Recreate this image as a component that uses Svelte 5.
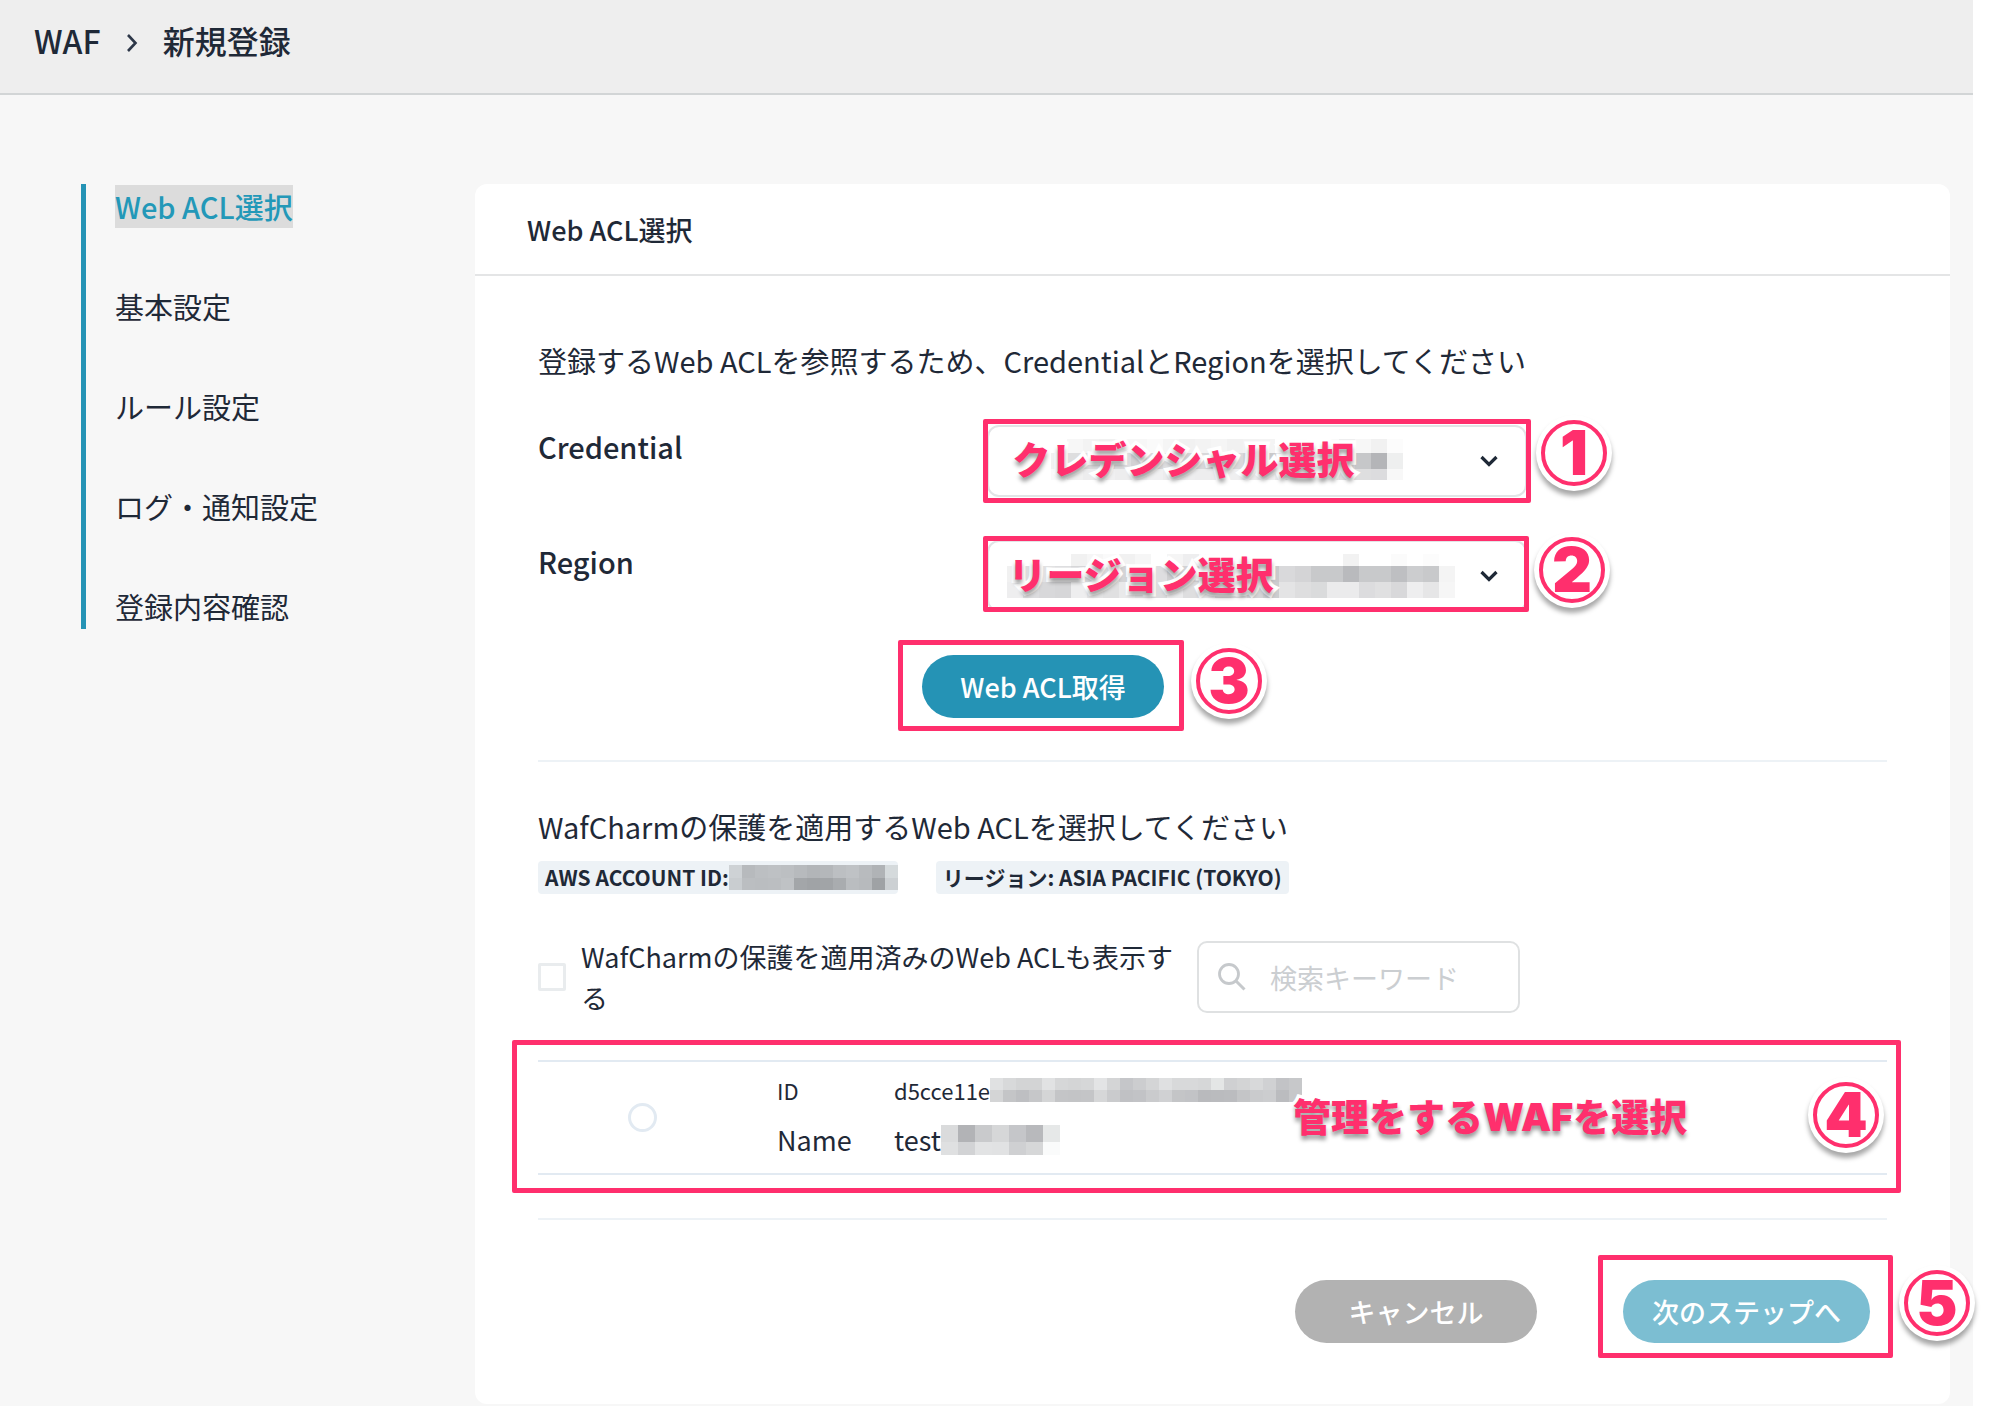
<script>
  const steps = ['Web ACL選択', '基本設定', 'ルール設定', 'ログ・通知設定', '登録内容確認'];

  // Each mask is a grid of grey blocks laid over a private value; w is the
  // block width, and each row has its own height and one colour per block.
  const masks = {
    credential: {
      w: 16,
      rows: [
        { h: 14, c: ['#ffffff', '#f7f7f7', '#f3f3f3', '#f1f1f1', '#f7f7f7', '#f7f7f7', '#fafafa', '#f5f5f5', '#f1f1f1', '#f3f3f3', '#f5f5f5', '#f1f1f1', '#f3f3f3', '#f4f4f4', '#ffffff', '#fbfbfb', '#ffffff', '#fafafa', '#eeeeef', '#f7f7f7', '#f1f1f1', '#fcfcfc'] },
        { h: 16, c: ['#f1f1f1', '#dededf', '#dcdcde', '#d6d6d8', '#dcdcde', '#d2d2d4', '#d9d9db', '#dedee0', '#d4d4d6', '#d8d8da', '#cfcfd1', '#d9d9db', '#d2d2d4', '#c9c9cb', '#d2d2d4', '#dcdcde', '#d0d0d2', '#d6d6d8', '#cfcfd1', '#c6c7c9', '#b4b5b8', '#eeefef'] },
        { h: 11, c: ['#fafafa', '#f1f1f1', '#ededee', '#f0f0f1', '#ededee', '#eeeeef', '#f0f0f1', '#ececed', '#eeeeef', '#ededee', '#ececed', '#efeff0', '#ececed', '#f0f0f1', '#e9e9ea', '#ececed', '#e6e6e7', '#e9e9ea', '#e0e0e1', '#dededf', '#dcdcde', '#f8f8f8'] }
      ]
    },
    region: {
      w: 16,
      rows: [
        { h: 12, c: ['#ffffff', '#ffffff', '#ffffff', '#ffffff', '#f1f1f1', '#f6f6f6', '#fafafa', '#f1f1f1', '#f6f6f6', '#ffffff', '#f5f5f5', '#eeeeef', '#fafafa', '#ffffff', '#ffffff', '#ffffff', '#ffffff', '#ffffff', '#ffffff', '#ffffff', '#ffffff', '#f2f2f2', '#ffffff', '#ffffff', '#fbfbfb', '#ffffff', '#fcfcfc', '#ffffff'] },
        { h: 16, c: ['#f1f1f1', '#dcdcde', '#e2e2e3', '#dedee0', '#d6d6d8', '#d9d9db', '#dedee0', '#d4d4d6', '#d8d8da', '#dedee0', '#cfcfd1', '#d2d2d4', '#d6d6d8', '#dcdcde', '#d0d0d2', '#d4d4d6', '#c9c9cb', '#d9d9db', '#d4d4d6', '#c8c9cb', '#c8c9cb', '#b9babd', '#c8c9cb', '#c8c9cb', '#bebfc2', '#cccdcf', '#c8c9cb', '#f4f4f4'] },
        { h: 16, c: ['#eeeeef', '#dcdcde', '#d8d8da', '#d6d6d8', '#eeeeef', '#e4e4e5', '#e0e0e1', '#e9e9ea', '#e4e4e5', '#dcdcde', '#ebebec', '#dededf', '#e7e7e8', '#d8d8da', '#dedee0', '#d4d4d6', '#cccdcf', '#e4e4e5', '#dededf', '#dadbdc', '#ebebec', '#ebebec', '#dcdcde', '#e0e0e1', '#d8d8da', '#eeeeef', '#e6e6e7', '#f6f6f6'] }
      ]
    },
    account: {
      w: 13,
      rows: [
        { h: 13, c: ['#ced2d5', '#b7babd', '#bcbfc2', '#bec1c4', '#bcbfc2', '#b7babd', '#b2b5b8', '#b4b7ba', '#bcbfc2', '#bfc2c5', '#b8bbbe', '#b0b3b6', '#d5dadc'] },
        { h: 12, c: ['#c9cdd0', '#bbbec1', '#babdc0', '#bbbec1', '#bfc2c5', '#a3a6a9', '#a0a3a6', '#a1a4a7', '#a9acaf', '#babdc0', '#b7babd', '#9fa2a5', '#ccd0d3'] }
      ]
    },
    id: {
      w: 13,
      rows: [
        { h: 12, c: ['#e0e1e2', '#d8d9da', '#d3d4d5', '#d3d4d5', '#e1e2e3', '#d6d7d8', '#d4d5d6', '#d6d7d8', '#e3e4e5', '#d4d5d6', '#c5c6c9', '#cccdcf', '#d4d5d6', '#dfe0e1', '#d8d9da', '#d8d9da', '#d6d7d8', '#e4e6e6', '#cfd0d2', '#d3d4d5', '#d8d9da', '#d0d1d3', '#c2c3c6', '#c7c8ca'] },
        { h: 12, c: ['#d4d5d6', '#c4c5c7', '#bebfc2', '#c6c7c9', '#d4d5d6', '#c4c5c7', '#c3c4c6', '#c4c5c7', '#d6d7d8', '#cacbcd', '#c0c1c4', '#c2c3c6', '#cacbcd', '#d0d1d3', '#c4c5c7', '#c2c3c6', '#b9babd', '#babbbe', '#bbbcbf', '#c4c5c7', '#cacbcd', '#cccdcf', '#bbbcbf', '#c6c7c9'] }
      ]
    },
    name: {
      w: 17,
      rows: [
        { h: 17, c: ['#dadbdc', '#b2b3b6', '#c9cacc', '#d6d7d8', '#c5c6c9', '#b8b9bc', '#e6e8e8'] },
        { h: 13, c: ['#dfe0e1', '#d2d3d5', '#e2e3e4', '#e1e2e3', '#cfd0d2', '#d6d7d8', '#fafbfb'] }
      ]
    }
  };

  let selected = $state('');
  let showProtected = $state(false);
  let keyword = $state('');
</script>

{#snippet mask(name)}
  {@const m = masks[name]}
  {@const width = m.w * m.rows[0].c.length}
  {@const height = m.rows.reduce((sum, r) => sum + r.h, 0)}
  <svg class="mask" {width} {height} viewBox="0 0 {width} {height}" shape-rendering="crispEdges" aria-hidden="true">
    {#each m.rows as row, r}
      {#each row.c as fill, i}
        <rect x={i * m.w} y={m.rows.slice(0, r).reduce((sum, p) => sum + p.h, 0)} width={m.w} height={row.h} {fill} />
      {/each}
    {/each}
  </svg>
{/snippet}

{#snippet arrow()}
  <svg class="arrow" width="20" height="14" viewBox="0 0 20 14" aria-hidden="true">
    <path d="M2.5 3 10 10.5 17.5 3" fill="none" stroke="#1f2937" stroke-width="3.2" />
  </svg>
{/snippet}

<div class="page">
  <header class="topbar">
    <a href="#waf">WAF</a>
    <svg width="12" height="26" viewBox="0 0 12 26" aria-hidden="true">
      <path d="M2 8 9.5 16 2 24" fill="none" stroke="#2d3748" stroke-width="2.6" />
    </svg>
    <span>新規登録</span>
  </header>

  <div class="layout">
    <nav class="steps" aria-label="登録ステップ">
      <ol>
        {#each steps as step, i}
          <li class:current={i === 0} aria-current={i === 0 ? 'step' : undefined}><span>{step}</span></li>
        {/each}
      </ol>
    </nav>

    <main class="card">
      <h1>Web ACL選択</h1>
      <div class="body">
        <p class="lead">登録するWeb ACLを参照するため、CredentialとRegionを選択してください</p>

        <div class="field">
          <label for="credential">Credential</label>
          <div class="control">
            <select id="credential"><option value=""></option></select>
            <div class="value credential">{@render mask('credential')}</div>
            {@render arrow()}
            <div class="frame tall"></div>
            <div class="note">クレデンシャル選択</div>
            <div class="badge first">1</div>
          </div>
        </div>

        <div class="field">
          <label for="region">Region</label>
          <div class="control">
            <select id="region"><option value=""></option></select>
            <div class="value region">{@render mask('region')}</div>
            {@render arrow()}
            <div class="frame short"></div>
            <div class="note start">リージョン選択</div>
            <div class="badge second">2</div>
          </div>
        </div>

        <div class="fetch">
          <button type="button" class="primary">Web ACL取得</button>
          <div class="frame"></div>
          <div class="badge">3</div>
        </div>

        <hr />

        <p class="lead">WafCharmの保護を適用するWeb ACLを選択してください</p>
        <div class="tags">
          <span class="tag masked">AWS ACCOUNT ID:{@render mask('account')}</span>
          <span class="tag">リージョン: ASIA PACIFIC (TOKYO)</span>
        </div>

        <div class="filters">
          <label class="check">
            <input type="checkbox" bind:checked={showProtected} />
            <span>WafCharmの保護を適用済みのWeb ACLも表示する</span>
          </label>
          <div class="search">
            <svg width="28" height="28" viewBox="0 0 28 28" aria-hidden="true">
              <circle cx="11" cy="11" r="9.5" fill="none" stroke="#c6c9cc" stroke-width="2.8" />
              <path d="M18 18 26.5 26.5" stroke="#c6c9cc" stroke-width="3" />
            </svg>
            <input type="text" placeholder="検索キーワード" aria-label="検索キーワード" bind:value={keyword} />
          </div>
        </div>

        <div class="acl">
          <div class="pick">
            <input type="radio" name="acl" value="test" aria-labelledby="acl-name" bind:group={selected} />
          </div>
          <dl>
            <dt class="small">ID</dt>
            <dd class="small">d5cce11e{@render mask('id')}</dd>
            <dt>Name</dt>
            <dd id="acl-name">test{@render mask('name')}</dd>
          </dl>
          <div class="frame"></div>
          <div class="note">管理をする<span>WAF</span>を選択</div>
          <div class="badge">4</div>
        </div>

        <hr />

        <div class="actions">
          <button type="button" class="cancel">キャンセル</button>
          <div class="next">
            <button type="button" class="primary muted">次のステップへ</button>
            <div class="frame"></div>
            <div class="badge">5</div>
          </div>
        </div>
      </div>
    </main>
  </div>
</div>

<style>
  :global(body) {
    margin: 0;
    background: #fff;
  }

  .page {
    box-sizing: border-box;
    min-height: 100vh;
    margin-right: 27px;
    background: #f7f7f7;
    color: #1f2937;
    font-family: "Noto Sans CJK JP", sans-serif;
    font-size: 27px;
    line-height: 43px;
  }

  .page :is(button, input, select) {
    font: inherit;
    color: inherit;
    box-sizing: border-box;
    margin: 0;
  }

  .topbar {
    display: flex;
    align-items: center;
    gap: 25px;
    padding: 16px 34px 29px;
    border-bottom: 2px solid #d2d5d6;
    background: #eee;
    font-size: 32px;
    font-weight: 500;
    line-height: 48px;
  }

  .topbar a {
    color: inherit;
    text-decoration: none;
  }

  .layout {
    display: flex;
    align-items: flex-start;
    padding: 89px 23px 0 81px;
  }

  .steps {
    box-sizing: border-box;
    flex: 0 0 394px;
  }

  .steps ol {
    display: grid;
    gap: 57px;
    margin: 0;
    padding: 1px 0 1px 29px;
    border-left: 5px solid #2593b5;
    list-style: none;
    font-size: 29px;
  }

  .steps li {
    line-height: 43px;
  }

  .current {
    color: #2398b8;
    font-weight: 500;
  }

  .current span {
    display: inline-block;
    background: #dcdcdc;
  }

  .card {
    flex: 1;
    min-width: 0;
    border-radius: 12px;
    background: #fff;
  }

  h1 {
    margin: 0;
    padding: 24px 52px 23px;
    border-bottom: 2px solid #e4e5e6;
    font-size: 27px;
    font-weight: 500;
    line-height: 43px;
  }

  .body {
    padding: 63px 63px 61px;
  }

  .lead {
    margin: 0;
    font-size: 29px;
  }

  .field {
    display: grid;
    grid-template-columns: 1fr 40% 360px;
    margin-bottom: 43px;
  }

  .lead + .field {
    margin-top: 43px;
  }

  .field label {
    font-weight: 500;
    font-size: 29px;
  }

  .control {
    position: relative;
    height: 72px;
  }

  select {
    appearance: none;
    width: 100%;
    height: 100%;
    padding: 0 60px 0 24px;
    border: 2px solid #e2e4e6;
    border-radius: 12px;
    background: #fff;
  }

  .value,
  .arrow,
  .frame,
  .note,
  .badge {
    position: absolute;
    pointer-events: none;
  }

  .value {
    top: 14px;
    left: 64px;
    display: flex;
  }

  .value.region {
    left: 20px;
  }

  .arrow {
    top: 29px;
    right: 28px;
  }

  .frame {
    inset: 0;
    border: 5px solid #ff2f6d;
    border-radius: 2px;
  }

  .frame.tall {
    inset: -6px -4px;
  }

  .frame.short {
    inset: -4px -2px 0 -4px;
  }

  .note {
    color: #ff2f6d;
    font-size: 38px;
    font-weight: 900;
    line-height: 56px;
    white-space: nowrap;
    -webkit-text-stroke: 7px #fff;
    paint-order: stroke fill;
    text-shadow: 0 4px 4px rgba(0, 0, 0, 0.4);
  }

  .note span {
    font-family: Inter, "Liberation Sans", sans-serif;
  }

  .control .note {
    top: 5px;
    left: 25px;
  }

  .control .note.start {
    left: 21px;
  }

  .badge {
    box-sizing: border-box;
    width: 66px;
    height: 66px;
    border: 4px solid #ff2f6d;
    border-radius: 50%;
    background: #fff;
    box-shadow: 0 0 0 5px #fff, 0 5px 5px 5px rgba(0, 0, 0, 0.35);
    color: #ff2f6d;
    font-family: Inter, "Liberation Sans", sans-serif;
    font-size: 62px;
    font-weight: 900;
    line-height: 58px;
    text-align: center;
  }

  .badge.first {
    top: -5px;
    left: calc(100% + 14px);
  }

  .badge.second {
    top: -3px;
    left: calc(100% + 12px);
  }

  .page button {
    height: 63px;
    padding: 0 29px;
    border: 0;
    border-radius: 32px;
    color: #fff;
    font-size: 27px;
    font-weight: 500;
  }

  .page .primary {
    background: #2593b5;
  }

  .page .primary.muted {
    background: #7cbed2;
  }

  .page .cancel {
    min-width: 242px;
    background: #b2b2b2;
  }

  .fetch {
    position: relative;
    width: max-content;
    margin-left: 384px;
  }

  .fetch button {
    min-width: 242px;
  }

  .fetch .frame {
    inset: -15px -20px -13px -24px;
  }

  .fetch .badge {
    top: -7px;
    left: calc(100% + 32px);
  }

  hr {
    height: 2px;
    margin: 42px 0 43px;
    border: 0;
    background: #edf2f6;
  }

  .tags {
    display: flex;
    gap: 38px;
    margin: 13px 0 42px;
  }

  .tag {
    display: flex;
    align-items: center;
    padding: 0 7px;
    border-radius: 4px;
    background: #edf2f6;
    font-size: 21px;
    font-weight: 700;
    line-height: 33px;
  }

  .masked {
    padding-right: 0;
  }

  .filters {
    display: flex;
    align-items: center;
    gap: 22px;
  }

  .check {
    display: flex;
    align-items: center;
    gap: 15px;
    width: 637px;
    line-height: 41px;
  }

  .check span {
    flex: 1;
  }

  .check input {
    appearance: none;
    flex: none;
    width: 28px;
    height: 28px;
    border: 3px solid #e9ecee;
    border-radius: 2px;
    background: #fff;
  }

  .search {
    box-sizing: border-box;
    display: flex;
    align-items: center;
    gap: 24px;
    width: 323px;
    height: 72px;
    padding: 0 19px;
    border: 2px solid #dfe1e2;
    border-radius: 10px;
  }

  .search svg {
    flex: none;
  }

  .search input {
    flex: 1;
    min-width: 0;
    padding: 0;
    border: 0;
    background: none;
  }

  .search input::placeholder {
    color: #cbced1;
    opacity: 1;
  }

  .acl {
    position: relative;
    display: grid;
    grid-template-columns: 239px 1fr;
    align-items: center;
    margin-top: 42px;
    border-top: 2px solid #e2eaf2;
    border-bottom: 2px solid #e2eaf2;
  }

  .pick {
    display: flex;
    padding-left: 90px;
  }

  .pick input {
    appearance: none;
    width: 29px;
    height: 29px;
    border: 3px solid #e2eaf2;
    border-radius: 50%;
    background: #fff;
  }

  dl {
    display: grid;
    grid-template-columns: 117px 1fr;
    row-gap: 8px;
    align-items: center;
    margin: 0;
    padding: 7px 0 12px;
    line-height: 42px;
  }

  dt,
  dd {
    margin: 0;
  }

  dd {
    display: flex;
    align-items: center;
  }

  .small {
    font-size: 22px;
  }

  .acl .frame {
    inset: -22px -14px -20px -26px;
  }

  .acl .note {
    top: 25px;
    left: 755px;
  }

  .acl .badge {
    top: 20px;
    right: 8px;
  }

  .acl + hr {
    margin: 43px 0 60px;
  }

  .actions {
    display: flex;
    justify-content: flex-end;
    gap: 86px;
    padding-right: 17px;
  }

  .next {
    position: relative;
  }

  .next button {
    min-width: 246px;
  }

  .next .frame {
    inset: -25px -23px -15px -25px;
  }

  .next .badge {
    top: -10px;
    left: calc(100% + 34px);
  }
</style>
